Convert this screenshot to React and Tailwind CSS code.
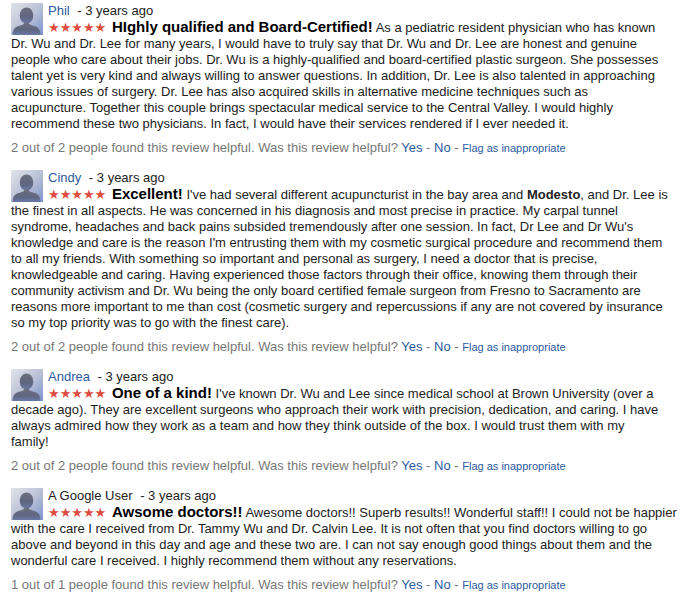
import React, { useId } from 'react';

// lines are broken where the original page breaks them
const reviews = [
	{
		name: 'Phil',
		isLink: true,
		title: 'HIghly qualified and Board-Certified!',
		lines: [
			'As a pediatric resident physician who has known',
			'Dr. Wu and Dr. Lee for many years, I would have to truly say that Dr. Wu and Dr. Lee are honest and genuine',
			'people who care about their jobs. Dr. Wu is a highly-qualified and board-certified plastic surgeon. She possesses',
			'talent yet is very kind and always willing to answer questions. In addition, Dr. Lee is also talented in approaching',
			'various issues of surgery. Dr. Lee has also acquired skills in alternative medicine techniques such as',
			'acupuncture. Together this couple brings spectacular medical service to the Central Valley. I would highly',
			'recommend these two physicians. In fact, I would have their services rendered if I ever needed it.',
		],
		helpful: '2 out of 2',
	},
	{
		name: 'Cindy',
		isLink: true,
		title: 'Excellent!',
		lines: [
			<>
				I've had several different acupuncturist in the bay area and <b>Modesto</b>,
				and Dr. Lee is
			</>,
			'the finest in all aspects. He was concerned in his diagnosis and most precise in practice. My carpal tunnel',
			"syndrome, headaches and back pains subsided tremendously after one session. In fact, Dr Lee and Dr Wu's",
			"knowledge and care is the reason I'm entrusting them with my cosmetic surgical procedure and recommend them",
			'to all my friends. With something so important and personal as surgery, I need a doctor that is precise,',
			'knowledgeable and caring. Having experienced those factors through their office, knowing them through their',
			'community activism and Dr. Wu being the only board certified female surgeon from Fresno to Sacramento are',
			'reasons more important to me than cost (cosmetic surgery and repercussions if any are not covered by insurance',
			'so my top priority was to go with the finest care).',
		],
		helpful: '2 out of 2',
	},
	{
		name: 'Andrea',
		isLink: true,
		title: 'One of a kind!',
		lines: [
			"I've known Dr. Wu and Lee since medical school at Brown University (over a",
			'decade ago). They are excellent surgeons who approach their work with precision, dedication, and caring. I have',
			'always admired how they work as a team and how they think outside of the box. I would trust them with my',
			'family!',
		],
		helpful: '2 out of 2',
	},
	{
		name: 'A Google User',
		isLink: false,
		title: 'Awsome doctors!!',
		lines: [
			'Awesome doctors!! Superb results!! Wonderful staff!! I could not be happier',
			'with the care I received from Dr. Tammy Wu and Dr. Calvin Lee. It is not often that you find doctors willing to go',
			'above and beyond in this day and age and these two are. I can not say enough good things about them and the',
			'wonderful care I received. I highly recommend them without any reservations.',
		],
		helpful: '1 out of 1',
	},
];

// default profile picture (grey silhouette)
const Avatar = () => {
	const id = useId();
	return (
		<svg
			viewBox="0 0 32 32"
			className="float-left mr-[5px] h-8 w-8"
			aria-hidden="true"
		>
			<defs>
				<linearGradient id={`${id}bg`} x1="0" y1="0" x2="1" y2="1">
					<stop offset="0" stopColor="#e2e4e9" />
					<stop offset="0.55" stopColor="#b7bfd6" />
					<stop offset="1" stopColor="#7d91cc" />
				</linearGradient>
				<linearGradient id={`${id}fg`} x1="0" y1="0" x2="0" y2="1">
					<stop offset="0" stopColor="#6b6f7d" />
					<stop offset="0.6" stopColor="#5f6680" />
					<stop offset="1" stopColor="#6a79a8" />
				</linearGradient>
			</defs>
			<rect width="32" height="32" fill={`url(#${id}bg)`} />
			<ellipse cx="15.5" cy="12.5" rx="6.8" ry="8" fill={`url(#${id}fg)`} />
			<path
				d="M1.5 32 C1.5 26 4.5 23.5 9.5 22.5 C12 22 13 21 13.5 19.5 L17.5 19.5 C18 21 19 22 21.5 22.5 C26.5 23.5 29.5 26 29.5 32 Z"
				fill={`url(#${id}fg)`}
			/>
		</svg>
	);
};

const Review = ({ review }) => (
	<div className="mb-[14px]">
		<div className="whitespace-nowrap">
			<Avatar />
			<div>
				{review.isLink ? (
					<a href="#" className="text-[#2d5aa0]">
						{review.name}
					</a>
				) : (
					<span>{review.name}</span>
				)}
				<span className="ml-[4px]"> - 3 years ago</span>
			</div>
			<div>
				<span className="mr-[2px] font-['DejaVu_Sans'] text-[13px] text-[#dc4c40]">
					★★★★★
				</span>{' '}
				<b className="text-[15px] text-black">{review.title}</b>{' '}
				{review.lines.map((line, i) => (
					<React.Fragment key={i}>
						{i > 0 && <br />}
						{line}
					</React.Fragment>
				))}
			</div>
		</div>
		<div className="mt-[8px] text-[#777]">
			{review.helpful} people found this review helpful. Was this review helpful?{' '}
			<a href="#" className="text-[#2d5aa0]">
				Yes
			</a>{' '}
			-{' '}
			<a href="#" className="text-[#2d5aa0]">
				No
			</a>{' '}
			-{' '}
			<a href="#" className="text-[11px] text-[#2d5aa0]">
				Flag as inappropriate
			</a>
		</div>
	</div>
);

export default function App() {
	return (
		<div className="min-h-[600px] overflow-hidden bg-white pl-[11px] pt-[3px] font-['Liberation_Sans',Arial,sans-serif] text-[13px] leading-4 text-[#222]">
			{reviews.map((review) => (
				<Review key={review.name} review={review} />
			))}
		</div>
	);
}
